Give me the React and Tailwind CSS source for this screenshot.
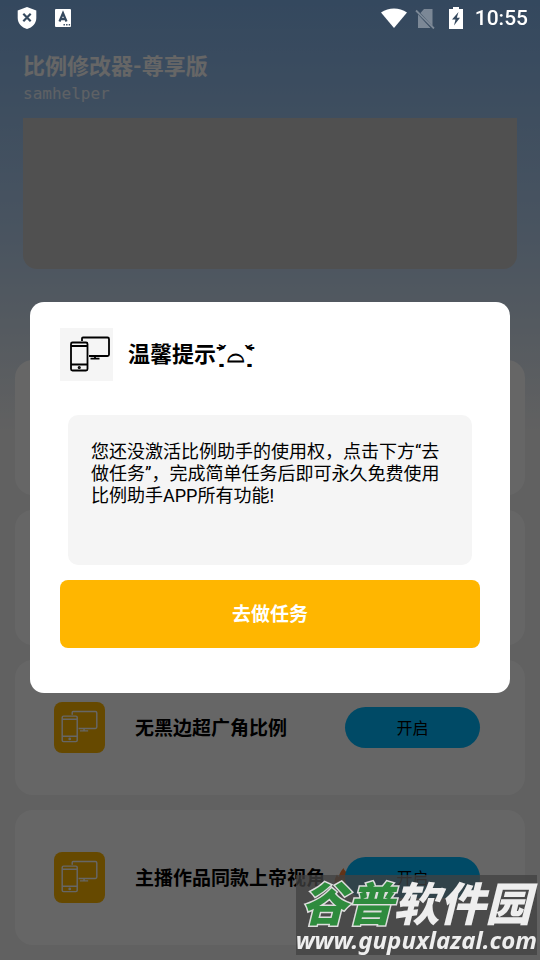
const cards = [
  { label: "", hot: false },
  { label: "", hot: false },
  { label: "无黑边超广角比例", hot: false },
  { label: "主播作品同款上帝视角", hot: true },
]

function DevicesIcon({ className, strokeWidth, viewBox = "0 0 53 53" }) {
  return (
    <svg className={className} viewBox={viewBox} fill="none" stroke="currentColor" strokeWidth={strokeWidth}>
      <path d="M22 13v-2.500q0-1 1-1h24.500q1.500 0 1.500 1.500v15.500q0 1.500-1.500 1.500h-18.500" />
      <path d="M35 28v2M30.500 30.700h9" />
      <rect x="11" y="14.500" width="16.500" height="28" rx="1.500" />
      <path d="M11 18h16.500M11 36.500h16.500" />
      <circle cx="19.250" cy="39.500" r="0.700" />
    </svg>
  )
}

function FlameIcon({ className }) {
  return (
    <svg className={className} viewBox="0 0 20 22">
      <path
        fill="#f4803a"
        d="M10.500 0c1 4 7.500 6.500 7.500 13.500 0 5-3.500 8-8 8s-8.500-2.500-8.500-8c0-3 1.500-5 2.500-7 .5 1.500 1 2 2 2.500C6 6 8 3 10.500 0z"
      />
      <path fill="#ffb84d" d="M10 10c1 2.500 4 3.500 4 7 0 2.500-1.800 4-4 4s-4.500-1.500-4.500-4c0-2 1-3 1.500-4 .5 1 1 1 1.500 1.500C8.500 13 9 11.500 10 10z" />
    </svg>
  )
}

function StatusBar() {
  return (
    <div className="fixed inset-x-0 top-0 z-30 flex h-9 items-center justify-between pr-3 pl-4 text-white">
      <div className="flex items-center gap-[17px]">
        <svg className="h-6 w-[22px]" viewBox="0 0 22 24">
          <path fill="currentColor" d="M11 1l9.300 3.500v7.500c0 5.500-4 9.500-9.300 11-5.300-1.500-9.300-5.500-9.300-11V4.500z" />
          <path stroke="#35495f" strokeWidth="2.200" d="M7.300 7.800l7.400 7.400M14.700 7.800l-7.400 7.400" />
        </svg>
        <svg className="h-[18px] w-4" viewBox="0 0 16 18">
          <rect width="16" height="18" rx="1" fill="currentColor" />
          <path fill="none" stroke="#35495f" strokeWidth="2.200" d="M4.500 12.500L8 4.200l3.500 8.300M5.500 10.200h5" />
          <path stroke="#35495f" strokeWidth="1.400" strokeDasharray="1.400 1.200" d="M8.500 15.800h7" />
        </svg>
      </div>
      <div className="flex items-center">
        <svg className="h-5 w-[26px]" viewBox="0 0 26 20">
          <path fill="currentColor" d="M0 4.500C8-1 18-1 26 4.500L13 20z" />
        </svg>
        <svg className="ml-2 h-[21px] w-5" viewBox="0 0 20 21" opacity="0.350">
          <path fill="currentColor" d="M9 1h8.500v17L5.500 5zM3 6.500L15.500 20H3z" />
          <path stroke="currentColor" strokeWidth="1.800" d="M1 2.500L19 20.500" />
        </svg>
        <svg className="ml-[14px] h-[22px] w-[14px]" viewBox="0 0 14 22">
          <path fill="currentColor" d="M4 0h6v2h4v20H0V2h4z" />
          <path fill="#35495f" d="M9.500 5L3 12.500h3.500L5 18.500l6-7.800H7.800z" />
        </svg>
        <span className="ml-3 font-[Roboto,sans-serif] text-[21px] leading-6 font-medium">10:55</span>
      </div>
    </div>
  )
}

function FeatureCard({ label, hot }) {
  return (
    <section className="flex h-[135px] items-center rounded-[18px] bg-white pr-[45px] pl-[39px]">
      <div className="size-[51px] shrink-0 rounded-lg bg-[#ffb600] text-white">
        <DevicesIcon className="size-[51px]" strokeWidth={1.6} viewBox="2 -1 56 56" />
      </div>
      <h2 className="ml-[30px] flex min-w-0 flex-1 items-center gap-2 pt-[3px] text-[19px] font-bold whitespace-nowrap">
        {label}
        {hot && <FlameIcon className="h-[22px] w-5 shrink-0" />}
      </h2>
      <button type="button" className="relative h-[41px] w-[135px] shrink-0 rounded-full bg-[#00b9ff] pt-[2px] text-base">
        开启
      </button>
    </section>
  )
}

function ActivateDialog() {
  return (
    <div className="fixed inset-0 z-20 flex items-center justify-center bg-black/60 px-[30px] pt-[34px]">
      <div role="dialog" aria-labelledby="dialog-title" className="w-full rounded-[14px] bg-white px-[30px] pt-[26px] pb-[45px]">
        <div className="flex items-center gap-[15px]">
          <div className="size-[53px] bg-[#f5f5f5]">
            <DevicesIcon className="size-[53px]" strokeWidth={1.8} />
          </div>
          <h2 id="dialog-title" className="pt-[2px] text-[22px] leading-8 font-bold whitespace-nowrap">
            温馨提示<span className="font-['DejaVu_Sans',sans-serif]">˃̣̣᷄⌓˂̣̣᷅</span>
          </h2>
        </div>
        <p className="mx-2 mt-[34px] min-h-[150px] rounded-[10px] bg-[#f5f5f5] px-[23px] pt-[26px] text-lg leading-[22px]">
          您还没激活比例助手的使用权，点击下方“去做任务”，完成简单任务后即可永久免费使用比例助手APP所有功能!
        </p>
        <button type="button" className="mt-[15px] h-[68px] w-full rounded-lg bg-[#ffb600] pt-[3px] text-[19px] font-bold text-white">
          去做任务
        </button>
      </div>
    </div>
  )
}

function Watermark() {
  return (
    <div className="fixed right-[3px] bottom-[5px] z-40 flex h-20 flex-col items-center justify-between bg-[#424242]/75 pt-[10px] whitespace-nowrap text-[#eeeeee] italic">
      <div className="text-[46px] leading-10 font-black">
        <span className="text-[#2e8b3d] [-webkit-text-stroke:3px_#dddddd] [paint-order:stroke_fill]">谷普</span>
        软件园
      </div>
      <div className="font-['Noto_Sans','Open_Sans',sans-serif] text-2xl leading-[30px] font-bold">www.gupuxlazal.com</div>
    </div>
  )
}

export default function App() {
  return (
    <div className="min-h-screen bg-[#f2f2f2] bg-[linear-gradient(#82b4ec_0px,#b9d3f0_240px,#f2f2f2_430px)] font-[Roboto,'Noto_Sans_CJK_SC',sans-serif] text-black">
      <StatusBar />

      <header className="px-[23px] pt-[51px]">
        <h1 className="text-[22px] leading-8 font-bold text-white">比例修改器-尊享版</h1>
        <p className="font-['DejaVu_Sans_Mono',monospace] text-base leading-[22px] text-white/80">samhelper</p>
        <div className="mt-[13px] h-[151px] rounded-b-[14px] bg-[#c8c8c8]" />
      </header>

      <main className="mt-[91px] flex flex-col gap-[15px] px-[15px] pb-[15px]">
        {cards.map((card, i) => (
          <FeatureCard key={i} label={card.label} hot={card.hot} />
        ))}
      </main>

      <ActivateDialog />
      <Watermark />
    </div>
  )
}
